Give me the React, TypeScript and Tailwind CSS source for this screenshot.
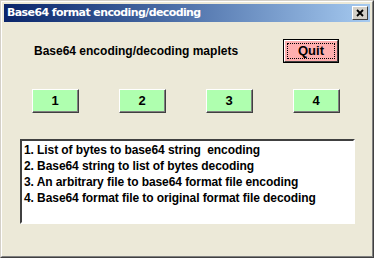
import React from "react";

const lines = [
  "1. List of bytes to base64 string  encoding",
  "2. Base64 string to list of bytes decoding",
  "3. An arbitrary file to base64 format file encoding",
  "4. Base64 format file to original format file decoding",
];

function NumButton({ label }: { label: string }) {
  return (
    <button
      type="button"
      className="h-[24px] w-[47px] border border-t-white border-l-white border-b-[#404040] border-r-[#404040] p-0"
    >
      <div className="flex h-full w-full items-center justify-center border-r border-b border-r-[#808080] border-b-[#808080] bg-[#afffaf] text-[13px] font-bold text-black">
        {label}
      </div>
    </button>
  );
}

export default function App() {
  return (
    <div className="h-[261px] w-[379px] bg-white font-['Liberation_Sans',Arial,sans-serif]">
      <div className="h-[258px] w-[374px] border border-t-[#d4d0c8] border-l-[#d4d0c8] border-b-[#404040] border-r-[#404040]">
        <div className="flex h-full w-full flex-col border border-t-white border-l-white border-b-[#808080] border-r-[#808080] bg-[#ece9d8] p-[2px]">
          {/* title bar */}
          <div className="flex h-[18px] items-center justify-between bg-gradient-to-r from-[#0a246a] to-[#a6caf0] pl-[3px] pr-[2px]">
            <span className="font-['DejaVu_Sans',Verdana,sans-serif] text-[11px] font-bold tracking-[-0.6px] text-white">
              Base64 format encoding/decoding
            </span>
            <div className="h-[14px] w-[16px] border border-t-white border-l-white border-b-[#404040] border-r-[#404040] bg-[#d4d0c8]">
              <svg width="14" height="12" viewBox="0 0 14 12" className="block">
                <path d="M4 3 L10 9 M10 3 L4 9" stroke="#000" strokeWidth="1.8" />
              </svg>
            </div>
          </div>

          {/* header row */}
          <div className="mt-[17px] flex h-[24px] items-center">
            <span className="ml-[30px] text-[12px] font-bold text-black">
              Base64 encoding/decoding maplets
            </span>
            <button
              type="button"
              className="ml-auto mr-[31px] h-[24px] w-[56px] border border-[#000] p-0"
            >
              <div className="h-full w-full border border-t-white border-l-white border-b-[#404040] border-r-[#404040]">
                <div className="flex h-full w-full items-center justify-center bg-[#ffafaf] p-[2px]">
                  <div className="flex h-full w-full items-center justify-center border border-dotted border-black text-[13px] font-bold text-black">
                    Quit
                  </div>
                </div>
              </div>
            </button>
          </div>

          {/* number buttons */}
          <div className="mt-[26px] ml-[28px] flex gap-[40px]">
            <NumButton label="1" />
            <NumButton label="2" />
            <NumButton label="3" />
            <NumButton label="4" />
          </div>

          {/* text area */}
          <div className="mt-[26px] ml-[16px] h-[85px] w-[335px] border-2 border-t-[#404040] border-l-[#404040] border-b-white border-r-white">
            <div className="h-full w-full bg-white pl-[2px] pt-[1px] text-[12px] font-bold leading-[16px] tracking-[-0.08px] text-black">
              {lines.map((l) => (
                <div key={l} className="whitespace-pre">
                  {l}
                </div>
              ))}
            </div>
          </div>
        </div>
      </div>
    </div>
  );
}
